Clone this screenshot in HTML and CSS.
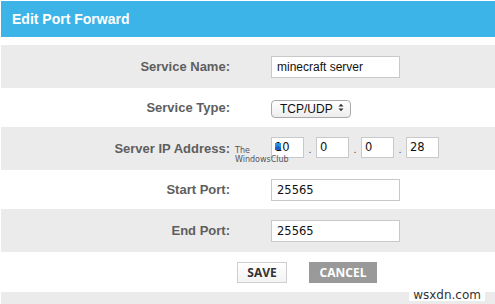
FILE: index.html
```html
<!DOCTYPE html>
<html lang="en">
<head>
    <meta charset="UTF-8">
    <title>Edit Port Forward</title>
    <link rel="stylesheet" href="styles.css">
</head>
<body>
    <div class="page">
        <div class="panel-header">Edit Port Forward</div>

        <form class="pf-form">
            <div class="row shade">
                <label class="row-label">Service Name:</label>
                <div class="row-field">
                    <input type="text" class="text-input" value="minecraft server">
                </div>
            </div>

            <div class="row">
                <label class="row-label">Service Type:</label>
                <div class="row-field">
                    <div class="select-wrap">
                        <select class="proto-select">
                            <option>TCP/UDP</option>
                            <option>TCP</option>
                            <option>UDP</option>
                        </select>
                        <span class="select-arrows">
                            <svg width="6" height="9" viewBox="0 0 6 9"><path d="M0.5 3.5 L3 0.8 L5.5 3.5 Z M0.5 5.5 L3 8.2 L5.5 5.5 Z" fill="#333"/></svg>
                        </span>
                    </div>
                </div>
            </div>

            <div class="row shade">
                <label class="row-label">Server IP Address:</label>
                <div class="row-field ip-field">
                    <input type="text" class="octet num" value="10">
                    <span class="ip-dot">.</span>
                    <input type="text" class="octet num" value="0">
                    <span class="ip-dot">.</span>
                    <input type="text" class="octet num" value="0">
                    <span class="ip-dot">.</span>
                    <input type="text" class="octet num" value="28">

                    <!-- watermark -->
                    <div class="wm">
                        <span>The</span>
                        <span>WindowsClub</span>
                    </div>
                    <svg class="wm-logo" width="6" height="7" viewBox="0 0 6 7">
                        <rect x="0" y="0" width="6" height="7" fill="#2b8fe0"/>
                        <path d="M0 5 L2.5 2.5 L6 5 L6 7 L0 7 Z" fill="#1565c0"/>
                    </svg>
                </div>
            </div>

            <div class="row">
                <label class="row-label">Start Port:</label>
                <div class="row-field">
                    <input type="text" class="text-input num" value="25565">
                </div>
            </div>

            <div class="row shade">
                <label class="row-label">End Port:</label>
                <div class="row-field">
                    <input type="text" class="text-input num" value="25565">
                </div>
            </div>

            <div class="row button-row">
                <button type="button" class="btn btn-save">SAVE</button>
                <button type="button" class="btn btn-cancel">CANCEL</button>
            </div>

            <div class="row shade footer-row"></div>
        </form>

        <span class="site-mark">wsxdn.com</span>
    </div>
</body>
</html>
```

FILE: styles.css
```css
/* page */
body {
    margin: 0;
    background-color: #fff;
    font-family: "Liberation Sans", Arial, Helvetica, sans-serif;
    color: #333;
}

.page {
    position: relative;
    padding: 1px 0 0 1px;
    height: 303px;
    overflow: hidden;
}

.panel-header {
    height: 36px;
    background-color: #3cb4e8;
    color: #fff;
    font-size: 14px;
    font-weight: bold;
    line-height: 36px;
    padding-left: 11px;
    margin-bottom: 8px;
}

/* rows */
.row {
    display: grid;
    grid-template-columns: 229px 1fr;
    column-gap: 41px;
    align-items: center;
    height: 39px;
}
.row.shade {
    height: 43px;
    background-color: #ebebeb;
}

.row-label {
    text-align: right;
    font-size: 13px;
    font-weight: bold;
    color: #5e5e5e;
}

.row-field {
    display: flex;
    align-items: center;
}

/* inputs */
.text-input {
    box-sizing: border-box;
    width: 129px;
    height: 22px;
    border: 1px solid #c9c9c9;
    background: #fff;
    padding: 0 5px;
    font-family: "Liberation Sans", Arial, sans-serif;
    font-size: 12px;
    color: #111;
    outline: none;
}
.num {
    font-family: "DejaVu Sans", sans-serif;
    font-size: 11.5px;
}

.select-wrap {
    position: relative;
    width: 80px;
    height: 18px;
}
.proto-select {
    appearance: none;
    -webkit-appearance: none;
    box-sizing: border-box;
    width: 100%;
    height: 100%;
    border: 1px solid #a9a9a9;
    border-radius: 4px;
    background: linear-gradient(#fff, #ededed);
    padding: 0 0 0 8px;
    font-family: "Liberation Sans", Arial, sans-serif;
    font-size: 12px;
    color: #111;
    outline: none;
}
.select-arrows {
    position: absolute;
    right: 7px;
    top: 4px;
    line-height: 0;
    pointer-events: none;
}

/* ip address */
.ip-field {
    position: relative;
    gap: 0;
    margin-top: -3px;
}
.octet {
    box-sizing: border-box;
    width: 33px;
    height: 21px;
    border: 1px solid #c9c9c9;
    background: #fff;
    padding: 0 3px;
    color: #111;
    outline: none;
}
.ip-dot {
    width: 12px;
    text-align: center;
    font-size: 11px;
    color: #555;
    padding-top: 4px;
}

.wm {
    position: absolute;
    left: -36px;
    top: 9px;
    display: flex;
    flex-direction: column;
    font-family: "DejaVu Sans", sans-serif;
    font-size: 8px;
    line-height: 9px;
    color: #555;
}
.wm-logo {
    position: absolute;
    left: 4px;
    top: 6px;
}

/* buttons */
.button-row {
    display: flex;
    gap: 22px;
    padding-left: 236px;
    height: 40px;
}
.btn {
    height: 21px;
    border: 1px solid #cfcfcf;
    font-family: "Open Sans", sans-serif;
    font-size: 12px;
    font-weight: 700;
    padding: 0;
    cursor: pointer;
}
.btn-save {
    width: 50px;
    background: linear-gradient(#fff, #f3f3f3);
    color: #333;
}
.btn-cancel {
    width: 68px;
    background-color: #999;
    border-color: #999;
    color: #fff;
}

.footer-row {
    height: 12px;
}

.site-mark {
    position: absolute;
    right: 10px;
    bottom: 3px;
    padding: 0 4px;
    background: #fff;
    font-family: "DejaVu Sans", sans-serif;
    font-size: 12px;
    line-height: 12px;
    color: #333;
}
```
